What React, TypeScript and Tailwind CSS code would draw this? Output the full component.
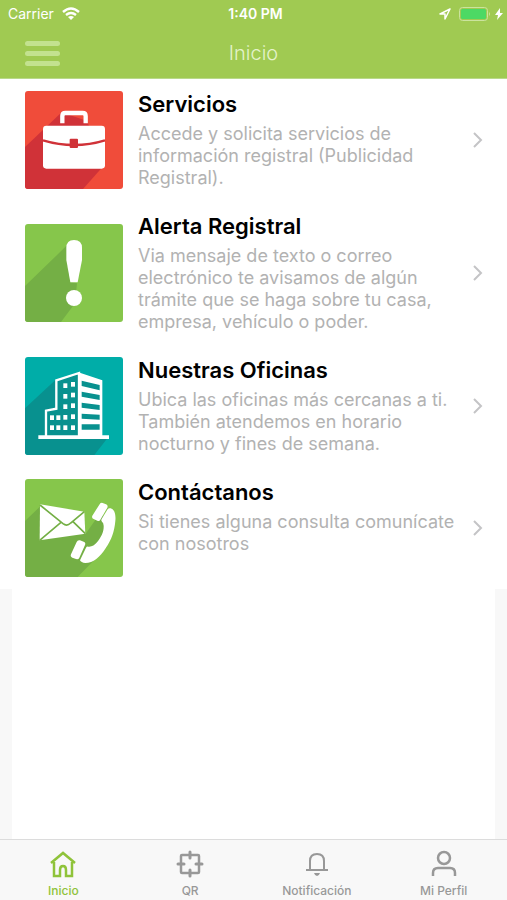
import { FC, ReactNode, useState } from "react";

type Service = {
    title: string;
    text: string;
    icon: ReactNode;
};

type Tab = {
    label: string;
    icon: ReactNode;
};

const BriefcaseArt: FC = () => (
    <>
        <rect width="294" height="294" fill="#f04c3a" />
        <path d="M0 168L110 64L186 90L238 222L174 294H0Z" fill="#d03238" />
        <path d="M112 97V75Q112 66 121 66H173Q182 66 182 75V97" fill="none" stroke="#fff" strokeWidth="13" />
        <rect x="54" y="104" width="186" height="129" rx="10" fill="#fff" />
        <path d="M54 148Q148 176 240 148" fill="none" stroke="#d03238" strokeWidth="7" />
        <rect x="134" y="143" width="25" height="28" rx="3" fill="#d03238" />
    </>
);

const AlertArt: FC = () => (
    <>
        <rect width="294" height="294" fill="#86c64b" />
        <path d="M0 186L126 64L136 175L156 178L150 238L108 294H0Z" fill="#74af45" />
        <path d="M124 72Q124 48 147 48Q171 48 171 72V108L158 175H136L124 108Z" fill="#fff" />
        <circle cx="147" cy="222" r="24" fill="#fff" />
    </>
);

const BuildingArt: FC = () => (
    <>
        <rect width="294" height="294" fill="#00ada8" />
        <path d="M0 154L88 72L150 50L228 74V240H250L208 294H0Z" fill="#08918f" />
        <path d="M160 46L232 70V238H160Z" fill="#fff" />
        <path d="M63 238V161L94 155V70L162 48V238" fill="none" stroke="#fff" strokeWidth="7" />
        <path d="M40 235H252V246H40Z" fill="#fff" />
        {[
            [115, 79], [138, 75],
            [115, 111], [138, 107],
            [115, 142], [138, 139],
            [75, 175], [94, 175], [115, 174], [138, 172],
            [75, 205], [94, 205], [115, 205], [138, 205],
        ].map(([x, y]) => (
            <rect key={`${x}-${y}`} x={x} y={y} width="12" height="14" fill="#fff" />
        ))}
        <path
            d="M170 71L224 84V100L170 87ZM170 104L224 114V129L170 119ZM170 137L224 144V159L170 152ZM170 170L224 173V188L170 185ZM170 202H224V218H170Z"
            fill="#08918f"
        />
    </>
);

const ContactArt: FC = () => (
    <>
        <rect width="294" height="294" fill="#86c64b" />
        <path d="M0 126L50 78L176 100L182 164L220 110L270 110L245 205L158 294H0Z" fill="#74af45" />
        <path d="M45 76L178 98L181 164L44 184Z" fill="#fff" />
        <path
            d="M45 78L114 134Q126 143 137 132L178 98M44 184L108 130M181 164L144 128"
            fill="none"
            stroke="#74af45"
            strokeWidth="5"
        />
        <path d="M223 77Q226 70 233 72L243 76Q250 79 247 86L226 122Q223 128 217 125L206 120Q199 117 202 110Z" fill="#fff" />
        <path d="M155 189Q158 182 165 184L176 188Q183 191 180 198L163 236Q160 242 153 240L142 236Q135 233 138 226Z" fill="#fff" />
        <path
            d="M248 91Q251 86 257 88C269 92 273 106 271 126C268 158 260 182 243 206C224 235 205 252 181 252Q168 251 165 244L183 206Q185 202 190 203C200 204 209 199 216 190C229 173 237 158 236 140Q236 132 230 127Q228 124 230 120Z"
            fill="#fff"
        />
    </>
);

const HomeIcon: FC = () => (
    <>
        <path d="M2 13L14 3L26 13" />
        <path d="M5 12V26H11V20Q11 16 14 16Q17 16 17 20V26H23V12" />
    </>
);

const QrIcon: FC = () => (
    <>
        <rect x="5" y="5" width="18" height="18" rx="1" />
        <path d="M14 2V8M14 20V26M2 14H8M20 14H26" strokeLinecap="round" strokeWidth="3" />
    </>
);

const BellIcon: FC = () => (
    <>
        <path d="M3 20H25M7 20V11Q7 4 14 4Q21 4 21 11V20" strokeWidth="2" />
        <path d="M11 23H17Q16 26 14 26Q12 26 11 23Z" fill="currentColor" stroke="none" />
    </>
);

const UserIcon: FC = () => (
    <>
        <circle cx="14" cy="8" r="6" />
        <path d="M3 26V23Q3 18 8 18H20Q25 18 25 23V26" />
    </>
);

const services: Service[] = [
    {
        title: "Servicios",
        text: "Accede y solicita servicios de información registral (Publicidad Registral).",
        icon: <BriefcaseArt />,
    },
    {
        title: "Alerta Registral",
        text: "Via mensaje de texto o correo electrónico te avisamos de algún trámite que se haga sobre tu casa, empresa, vehículo o poder.",
        icon: <AlertArt />,
    },
    {
        title: "Nuestras Oficinas",
        text: "Ubica las oficinas más cercanas a ti. También atendemos en horario nocturno y fines de semana.",
        icon: <BuildingArt />,
    },
    {
        title: "Contáctanos",
        text: "Si tienes alguna consulta comunícate con nosotros",
        icon: <ContactArt />,
    },
];

const tabs: Tab[] = [
    { label: "Inicio", icon: <HomeIcon /> },
    { label: "QR", icon: <QrIcon /> },
    { label: "Notificación", icon: <BellIcon /> },
    { label: "Mi Perfil", icon: <UserIcon /> },
];

const StatusBar: FC = () => (
    <div className="grid h-7 grid-cols-[1fr_auto_1fr] items-center pl-2 pr-1 text-white">
        <div className="flex items-center gap-2 text-sm">
            <span>Carrier</span>
            <svg viewBox="0 0 18 14" className="h-3.5 w-4.5" fill="none" stroke="currentColor" strokeWidth="2.4">
                <path d="M1 5Q9 -2 17 5M4 8Q9 4 14 8" />
                <path d="M6 10Q9 8 12 10L9 13Z" fill="currentColor" stroke="none" />
            </svg>
        </div>
        <span className="text-sm font-semibold">1:40 PM</span>
        <div className="flex items-center justify-end gap-1">
            <svg viewBox="0 0 12 12" className="mr-1 size-3" fill="none" stroke="currentColor" strokeWidth="1.5" strokeLinejoin="round">
                <path d="M11 1L1 6H6V11Z" />
            </svg>
            <svg viewBox="0 0 32 14" className="h-3.5 w-8">
                <rect x="0.5" y="0.5" width="28" height="13" rx="3" fill="none" stroke="#cbe39e" />
                <rect x="2" y="2" width="25" height="10" rx="1.5" fill="#4cd964" />
                <path d="M30 5Q32 7 30 9Z" fill="#cbe39e" />
            </svg>
            <svg viewBox="0 0 8 12" className="h-3 w-2" fill="currentColor">
                <path d="M5 0L0 7H3L2 12L8 5H5Z" />
            </svg>
        </div>
    </div>
);

const ServiceRow: FC<Service> = ({ title, text, icon }) => (
    <li>
        <button type="button" className="flex w-full items-center bg-white py-3 pl-[25px] pr-6 text-left">
            <svg viewBox="0 0 294 294" className="size-[98px] shrink-0 rounded-[3px]" aria-hidden="true">
                {icon}
            </svg>
            <span className="ml-[15px] min-w-0 flex-1 self-start">
                <span className="block text-[22px] leading-[26px] font-semibold text-black">{title}</span>
                <span className="mt-1.5 block text-lg leading-[22px] text-[#b2b2b2]">{text}</span>
            </span>
            <svg viewBox="0 0 10 16" className="ml-4 h-4 w-2.5 shrink-0" fill="none" stroke="#c4c4c6" strokeWidth="2">
                <path d="M1 1L8 8L1 15" />
            </svg>
        </button>
    </li>
);

export default function App() {
    const [active, setActive] = useState("Inicio");

    return (
        <div className="flex min-h-screen flex-col bg-[#f8f8f8] font-[Inter,'Liberation_Sans',sans-serif]">
            <header className="border-b border-[#b9d98a] bg-[#a0ca52]">
                <StatusBar />
                <div className="grid h-[50px] grid-cols-[1fr_auto_1fr] items-center px-[25px]">
                    <button type="button" aria-label="Menú" className="flex w-[35px] flex-col gap-[5px]">
                        <span className="h-[5px] rounded-full bg-[#c3e28f]" />
                        <span className="h-[5px] rounded-full bg-[#c3e28f]" />
                        <span className="h-[5px] rounded-full bg-[#c3e28f]" />
                    </button>
                    <h1 className="text-xl font-light text-[#e4f3cb]">Inicio</h1>
                </div>
            </header>

            <main className="flex flex-1 flex-col">
                <ul>
                    {services.map((service) => (
                        <ServiceRow key={service.title} {...service} />
                    ))}
                </ul>
                <div className="mx-3 flex-1 bg-white" />
            </main>

            <nav className="grid grid-cols-4 border-t border-[#dcdcdc] bg-[#f8f8f8] pt-2.5">
                {tabs.map((tab) => (
                    <button
                        key={tab.label}
                        type="button"
                        onClick={() => setActive(tab.label)}
                        className={`flex flex-col items-center gap-1 ${active === tab.label ? "text-[#8fc33a]" : "text-[#989898]"}`}
                    >
                        <svg viewBox="0 0 28 28" className="size-7" fill="none" stroke="currentColor" strokeWidth="2.5" aria-hidden="true">
                            {tab.icon}
                        </svg>
                        <span className="text-xs leading-[18px] font-medium">{tab.label}</span>
                    </button>
                ))}
            </nav>
        </div>
    );
}
